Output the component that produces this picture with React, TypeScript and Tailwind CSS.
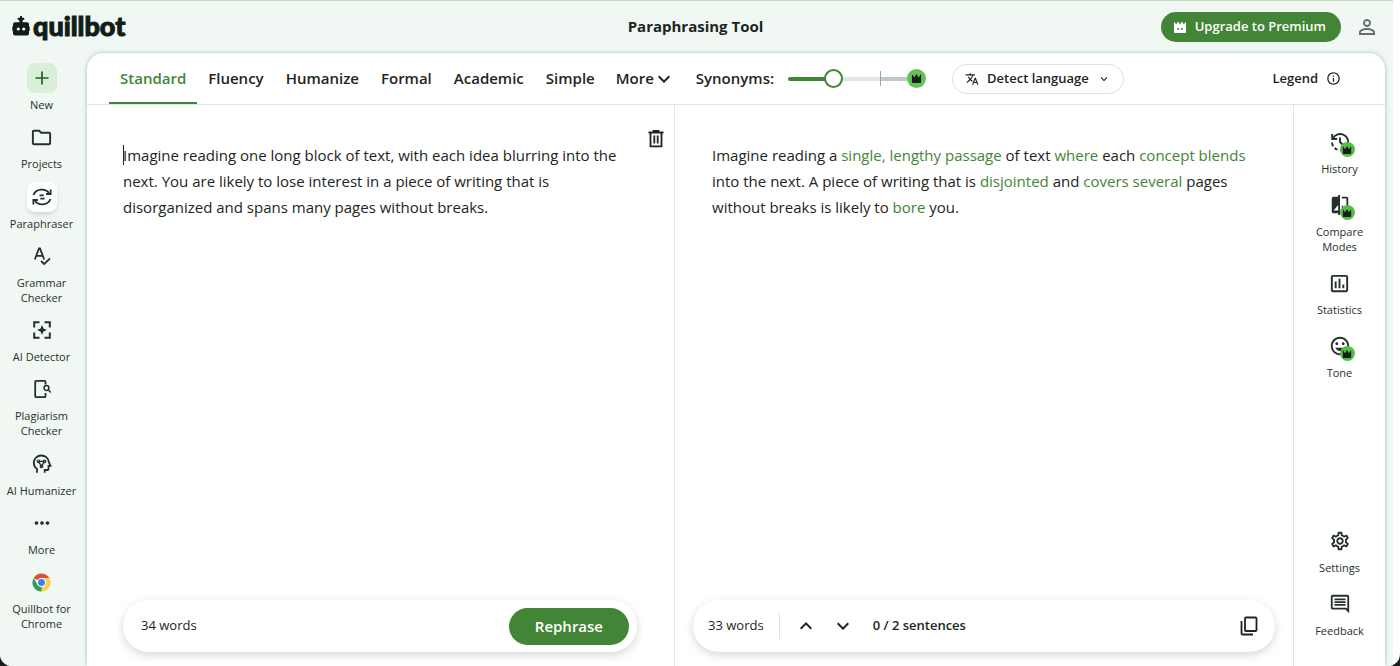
import { useState } from 'react';
import type { ReactNode } from 'react';
import {
  MdCompare,
  MdOutlineComment,
  MdOutlineFolder,
  MdInfoOutline,
  MdKeyboardArrowDown,
  MdKeyboardArrowUp,
  MdMoreHoriz,
  MdOutlineInsertChart,
  MdOutlineMood,
  MdOutlineSettings,
  MdPersonOutline,
  MdTranslate,
} from 'react-icons/md';

const SOURCE =
  'Imagine reading one long block of text, with each idea blurring into the next. You are likely to lose interest in a piece of writing that is disorganized and spans many pages without breaks.';

const RESULT = [
  { text: 'Imagine reading a ' },
  { text: 'single, lengthy passage', changed: true },
  { text: ' of text ' },
  { text: 'where', changed: true },
  { text: ' each ' },
  { text: 'concept blends', changed: true },
  { text: ' into the next. A piece of writing that is ' },
  { text: 'disjointed', changed: true },
  { text: ' and ' },
  { text: 'covers several', changed: true },
  { text: ' pages without breaks is likely to ' },
  { text: 'bore', changed: true },
  { text: ' you.' },
];

const MODES = ['Standard', 'Fluency', 'Humanize', 'Formal', 'Academic', 'Simple'];

function Crown({ className }: { className?: string }) {
  return (
    <svg viewBox="0 0 12 12" className={className} fill="currentColor" aria-hidden="true">
      <path d="M1 1.2 3.600 5 6 1.200 8.400 5 11 1.200V10a.8.800 0 0 1-.8.800H1.800A.8.800 0 0 1 1 10z" />
    </svg>
  );
}

function PremiumCrown() {
  return (
    <svg viewBox="0 0 14 14" width="14" height="14" fill="currentColor" aria-hidden="true">
      <path d="M1 1.500 3.200 4.500 5 1.500 7 4.500 9 1.500 10.800 4.500 13 1.500V12a1 1 0 0 1-1 1H2a1 1 0 0 1-1-1z" />
      <path d="M4.300 8h1.800v1.800H4.300zM7.900 8h1.800v1.800H7.900z" fill="#438536" />
    </svg>
  );
}

function LogoMark() {
  return (
    <svg viewBox="0 0 18 20" width="18" height="20" fill="#111d17" aria-hidden="true">
      <path d="M8 .8a1 1 0 0 1 2 0V1.800h1.500a1 1 0 0 1 .4 1.900L10.600 4.600V6.200H15a2 2 0 0 1 2 2v2a1 1 0 0 1 .7 1v3a1 1 0 0 1-.7 1V17.500a2 2 0 0 1-2 2H3a2 2 0 0 1-2-2V15.200a1 1 0 0 1-.7-1v-3a1 1 0 0 1 .7-1v-2a2 2 0 0 1 2-2h4.400V4.600L6.100 3.700A1 1 0 0 1 6.500 1.800H8z" />
      <circle cx="6.300" cy="13" r="1.600" fill="#f1f8f4" />
      <circle cx="11.700" cy="13" r="1.600" fill="#f1f8f4" />
    </svg>
  );
}

function ParaphraseIcon() {
  return (
    <svg viewBox="0 0 20 20" width="20" height="20" fill="none" stroke="currentColor" strokeWidth="1.8" aria-hidden="true">
      <path d="M1.500 8A8.800 8 0 0 1 17 6M18.500 12A8.800 8 0 0 1 3 14" />
      <path d="M18.600 2.500v4.500h-4.500M1.400 17.500v-4.500h4.500" />
      <path d="M7.500 8.300h4.200M8.300 11.700h4.200" />
    </svg>
  );
}

function GrammarIcon() {
  return (
    <svg viewBox="0 0 20 20" width="20" height="20" fill="none" stroke="currentColor" strokeWidth="1.8" aria-hidden="true">
      <path d="M2.800 13.500 7 2.500h1l4.200 11M4.300 9.800h6.400" />
      <path d="m9 15 3.200 3 5.800-5.600" />
    </svg>
  );
}

function DetectorIcon() {
  return (
    <svg viewBox="0 0 20 20" width="20" height="20" fill="none" stroke="currentColor" strokeWidth="2" aria-hidden="true">
      <path d="M2.200 7.500V2.200h5.300M12.500 2.200h5.300v5.300M17.800 12.500v5.300h-5.300M7.500 17.800H2.200v-5.300" />
      <path d="M10 5 11.500 8.500 15 10l-3.500 1.500L10 15l-1.500-3.500L5 10l3.500-1.500z" fill="currentColor" stroke="none" />
    </svg>
  );
}

function PlagiarismIcon() {
  return (
    <svg viewBox="0 0 20 20" width="20" height="20" fill="none" stroke="currentColor" strokeWidth="1.8" aria-hidden="true">
      <path d="M13.500 5.500V2.800a1 1 0 0 0-1-1H4.200a1 1 0 0 0-1 1v14.400a1 1 0 0 0 1 1h8.300a1 1 0 0 0 1-1V14" />
      <circle cx="14.500" cy="9" r="2.400" strokeWidth="1.500" />
      <path d="m16.200 10.800 2.600 2.700" strokeWidth="1.500" />
    </svg>
  );
}

function HumanizerIcon() {
  return (
    <svg viewBox="0 0 20 20" width="20" height="20" fill="none" stroke="currentColor" strokeWidth="1.800" aria-hidden="true">
      <path d="M5 18.700v-3.800A7.300 7.300 0 0 1 1.800 8.800 7.400 7.400 0 0 1 9.300 1.500c4.200 0 7.200 2.900 7.500 6.500l1.700 3.800h-2v3.400a.8.800 0 0 1-.8.800h-3v2.700" />
      <path d="M6.500 7.300h6M6.500 7.300 9.500 12.300l3-5" strokeWidth="1.300" />
      <circle cx="6.500" cy="7.300" r="1.300" strokeWidth="1.200" />
      <circle cx="12.500" cy="7.300" r="1.300" strokeWidth="1.200" />
      <circle cx="9.500" cy="12.300" r="1.300" strokeWidth="1.200" />
    </svg>
  );
}

function HistoryIcon() {
  return (
    <svg viewBox="0 0 20 20" width="20" height="20" fill="none" stroke="currentColor" strokeWidth="1.9" aria-hidden="true">
      <path d="M3 6.500A8 8 0 1 1 10 18" />
      <path d="M2.200 2v5h5M10 5.500V10l3.300 3.200" />
      <path d="M2 10.500a8 8 0 0 0 1.200 3.800M4.600 16a8 8 0 0 0 3 1.700" />
    </svg>
  );
}

function CopyIcon() {
  return (
    <svg viewBox="0 0 18 20" width="18" height="20" fill="none" stroke="currentColor" strokeWidth="1.8" aria-hidden="true">
      <rect x="5" y="1.500" width="11.500" height="13.500" rx="1" />
      <path d="M1.500 5v12.500a1 1 0 0 0 1 1h10.500" />
    </svg>
  );
}

function ChromeIcon() {
  return (
    <svg viewBox="0 0 20 20" width="19" height="19" aria-hidden="true">
      <path d="M10 10 1.770 5.250A9.500 9.500 0 0 1 18.230 5.250H10z" fill="#dd4f3e" />
      <path d="M10 5.250h8.230A9.500 9.500 0 0 1 10 19.500l4.100-7.100z" fill="#fbd04b" />
      <path d="M1.770 5.250 5.900 12.400 10 14.700l1.800-.4L10 19.500A9.500 9.500 0 0 1 1.770 5.250z" fill="#2f9e5a" />
      <path d="M10 14.500 14.110 12.400 10 19.500z" fill="#fbd04b" />
      <circle cx="10" cy="10" r="4.700" fill="#fff" />
      <circle cx="10" cy="10" r="3.600" fill="#3f7fe6" />
    </svg>
  );
}

function TrashIcon() {
  return (
    <svg viewBox="0 0 18 20" width="18" height="20" fill="none" stroke="currentColor" strokeWidth="1.8" aria-hidden="true">
      <path d="M1.500 3.500h15M6.500 3V1.800h5V3M3.500 3.500v13.800h11V3.500M7.300 6.500v8M10.700 6.500v8" />
    </svg>
  );
}

interface NavItemProps {
  label: string;
  icon: ReactNode;
  boxClass?: string;
  premium?: boolean;
}

function NavItem({ label, icon, boxClass = '', premium = false }: NavItemProps) {
  return (
    <button className="flex w-full flex-col items-center gap-1 text-[11px] leading-[15px] text-[#26302b]">
      <span className={`relative flex size-[30px] items-center justify-center rounded-lg ${boxClass}`}>
        {icon}
        {premium && (
          <span className="absolute right-0 bottom-0 flex size-[15px] items-center justify-center rounded-full bg-[#58bd48]">
            <Crown className="size-[10px] text-[#14211a]" />
          </span>
        )}
      </span>
      <span className="max-w-[76px]">{label}</span>
    </button>
  );
}

export default function App() {
  const [mode, setMode] = useState('Standard');
  const [text, setText] = useState(SOURCE);
  const [synonyms, setSynonyms] = useState(1);

  return (
    <div className="bg-[#17201a] font-['Open_Sans','Noto_Sans',sans-serif] text-[#1c2521]">
      <div className="flex min-h-screen flex-col overflow-hidden rounded-b-xl bg-white pr-[7px]">
        <div className="flex grow flex-col border-t border-[#badcba] bg-[#f1f8f4]">
          {/* Header */}
          <header className="grid h-[52px] shrink-0 grid-cols-[1fr_auto_1fr] items-center pr-3.5 pl-3">
            <a href="#" aria-label="quillbot" className="flex items-center gap-[3px] pb-0.5 text-[#111d17]">
              <LogoMark />
              <span className="font-['Lato',sans-serif] text-[27px] leading-7 font-black [-webkit-text-stroke:1px_#111d17]">quillbot</span>
            </a>
            <h1 className="pb-0.5 text-[15px] font-bold">Paraphrasing Tool</h1>
            <div className="flex items-center justify-end gap-3.5">
              <button className="flex h-[30px] items-center gap-2 rounded-full bg-[#438536] pr-[15px] pl-3 text-[13px] font-semibold text-white">
                <PremiumCrown />
                Upgrade to Premium
              </button>
              <button aria-label="Account">
                <MdPersonOutline className="size-6 text-[#66706b]" />
              </button>
            </div>
          </header>

          <div className="flex grow">
            {/* Left navigation */}
            <nav className="flex w-[83px] shrink-0 flex-col justify-between pt-[10px] pb-[35px]">
              <NavItem
                label="New"
                boxClass="bg-[#d9efd9]"
                icon={
                  <svg viewBox="0 0 14 14" width="14" height="14" stroke="#226127" strokeWidth="1.700" aria-hidden="true">
                    <path d="M7 0.500v13M0.500 7h13" />
                  </svg>
                }
              />
              <NavItem label="Projects" icon={<MdOutlineFolder size={23} />} />
              <NavItem label="Paraphraser" boxClass="bg-white shadow-md" icon={<ParaphraseIcon />} />
              <NavItem label="Grammar Checker" icon={<GrammarIcon />} />
              <NavItem label="AI Detector" icon={<DetectorIcon />} />
              <NavItem label="Plagiarism Checker" icon={<PlagiarismIcon />} />
              <NavItem label="AI Humanizer" icon={<HumanizerIcon />} />
              <NavItem label="More" icon={<MdMoreHoriz size={22} />} />
              <NavItem label="Quillbot for Chrome" icon={<ChromeIcon />} />
            </nav>

            <main className="mr-2 ml-1 flex min-w-0 grow flex-col rounded-t-2xl bg-white shadow-[0_0_4px_rgba(60,100,85,0.4)]">
              {/* Modes */}
              <div className="flex h-[52px] shrink-0 items-center border-b border-[#dce6e2] pr-11 pl-[22px] text-[15px] font-semibold">
                <div className="flex h-full">
                  {MODES.map((m) => (
                    <button
                      key={m}
                      onClick={() => setMode(m)}
                      className={`border-y-2 border-transparent px-[11px] ${m === mode ? 'border-b-[#438536] text-[#438536]' : ''}`}
                    >
                      {m}
                    </button>
                  ))}
                  <button className="flex items-center pl-[10px]">
                    More
                    <MdKeyboardArrowDown size={24} className="-ml-0.5" />
                  </button>
                </div>
                <label htmlFor="synonyms" className="ml-5">
                  Synonyms:
                </label>
                <div className="relative ml-1 flex h-5 w-[158px] items-center">
                  <span className="absolute right-5 left-[10px] h-1 rounded-full bg-[#dde6e3]" />
                  <span className="absolute right-5 left-[102px] h-1 bg-[#bfc9c6]" />
                  <span className="absolute left-[102px] h-[15px] w-px bg-[#9aa5a1]" />
                  <span className="absolute left-[10px] h-1 rounded-full bg-[#438536]" style={{ width: synonyms * 46 }} />
                  <span className="absolute right-[10px] flex size-[19px] items-center justify-center rounded-full bg-[#64c153]">
                    <Crown className="size-[11px] text-[#14211a]" />
                  </span>
                  <input
                    id="synonyms"
                    type="range"
                    min={0}
                    max={3}
                    value={synonyms}
                    onChange={(e) => setSynonyms(Number(e.target.value))}
                    className="relative w-full appearance-none bg-transparent [&::-webkit-slider-thumb]:size-[19px] [&::-webkit-slider-thumb]:appearance-none [&::-webkit-slider-thumb]:rounded-full [&::-webkit-slider-thumb]:border-2 [&::-webkit-slider-thumb]:border-[#438536] [&::-webkit-slider-thumb]:bg-white"
                  />
                </div>
                <button className="ml-4 flex h-[30px] items-center rounded-full border border-[#dce2e0] px-3 text-[13px]">
                  <MdTranslate size={14} />
                  <span className="mx-2">Detect language</span>
                  <MdKeyboardArrowDown size={14} />
                </button>
                <button className="ml-auto flex items-center gap-2 text-[13px]">
                  Legend
                  <MdInfoOutline size={15} />
                </button>
              </div>

              <div className="grid grow grid-cols-[19fr_20fr_91px]">
                {/* Source text */}
                <section className="flex min-w-0 flex-col border-r border-[#e0e7e4] pr-[37px] pb-[14px] pl-9">
                  <div className="relative flex grow flex-col pt-[37px]">
                    <textarea
                      aria-label="Text to paraphrase"
                      value={text}
                      onChange={(e) => setText(e.target.value)}
                      className="w-full grow resize-none text-[15px] leading-[26px] outline-none"
                    />
                    <span className="absolute top-10 left-0 h-5 w-px bg-[#1c2521]" />
                    <button aria-label="Delete text" className="absolute top-6 -right-7">
                      <TrashIcon />
                    </button>
                  </div>
                  <div className="flex h-[52px] items-center justify-between rounded-full pr-2 pl-[18px] shadow-[0_3px_10px_rgba(0,0,0,0.16)]">
                    <span className="text-[13px]">34 words</span>
                    <button className="h-[37px] rounded-full bg-[#438536] px-[26px] text-[15px] font-semibold text-white">Rephrase</button>
                  </div>
                </section>

                {/* Paraphrased text */}
                <section className="flex min-w-0 flex-col border-r border-[#dce6e2] px-[18px] pb-[14px]">
                  <p className="grow px-[19px] pt-[37px] text-[15px] leading-[26px]">
                    {RESULT.map((part) => (
                      <span key={part.text} className={part.changed ? 'text-[#438536]' : ''}>
                        {part.text}
                      </span>
                    ))}
                  </p>
                  <div className="flex h-[52px] items-center rounded-full pr-[17px] pl-[15px] text-[13px] shadow-[0_3px_10px_rgba(0,0,0,0.16)]">
                    <span>33 words</span>
                    <span className="ml-[15px] h-[26px] w-px bg-[#d9e2df]" />
                    <button aria-label="Previous sentence" className="ml-[14px]">
                      <MdKeyboardArrowUp size={24} />
                    </button>
                    <button aria-label="Next sentence" className="ml-[13px]">
                      <MdKeyboardArrowDown size={24} />
                    </button>
                    <span className="ml-[18px] font-semibold">0 / 2 sentences</span>
                    <button aria-label="Copy" className="ml-auto">
                      <CopyIcon />
                    </button>
                  </div>
                </section>

                {/* Tools */}
                <aside className="flex flex-col gap-[14px] pt-[22px] pb-7">
                  <NavItem label="History" icon={<HistoryIcon />} premium />
                  <NavItem label="Compare Modes" icon={<MdCompare size={22} />} premium />
                  <NavItem label="Statistics" icon={<MdOutlineInsertChart size={23} />} />
                  <NavItem label="Tone" icon={<MdOutlineMood size={22} />} premium />
                  <div className="mt-auto flex flex-col gap-[14px]">
                    <NavItem label="Settings" icon={<MdOutlineSettings size={22} />} />
                    <NavItem label="Feedback" icon={<MdOutlineComment size={22} />} />
                  </div>
                </aside>
              </div>
            </main>
          </div>
        </div>
      </div>
    </div>
  );
}
